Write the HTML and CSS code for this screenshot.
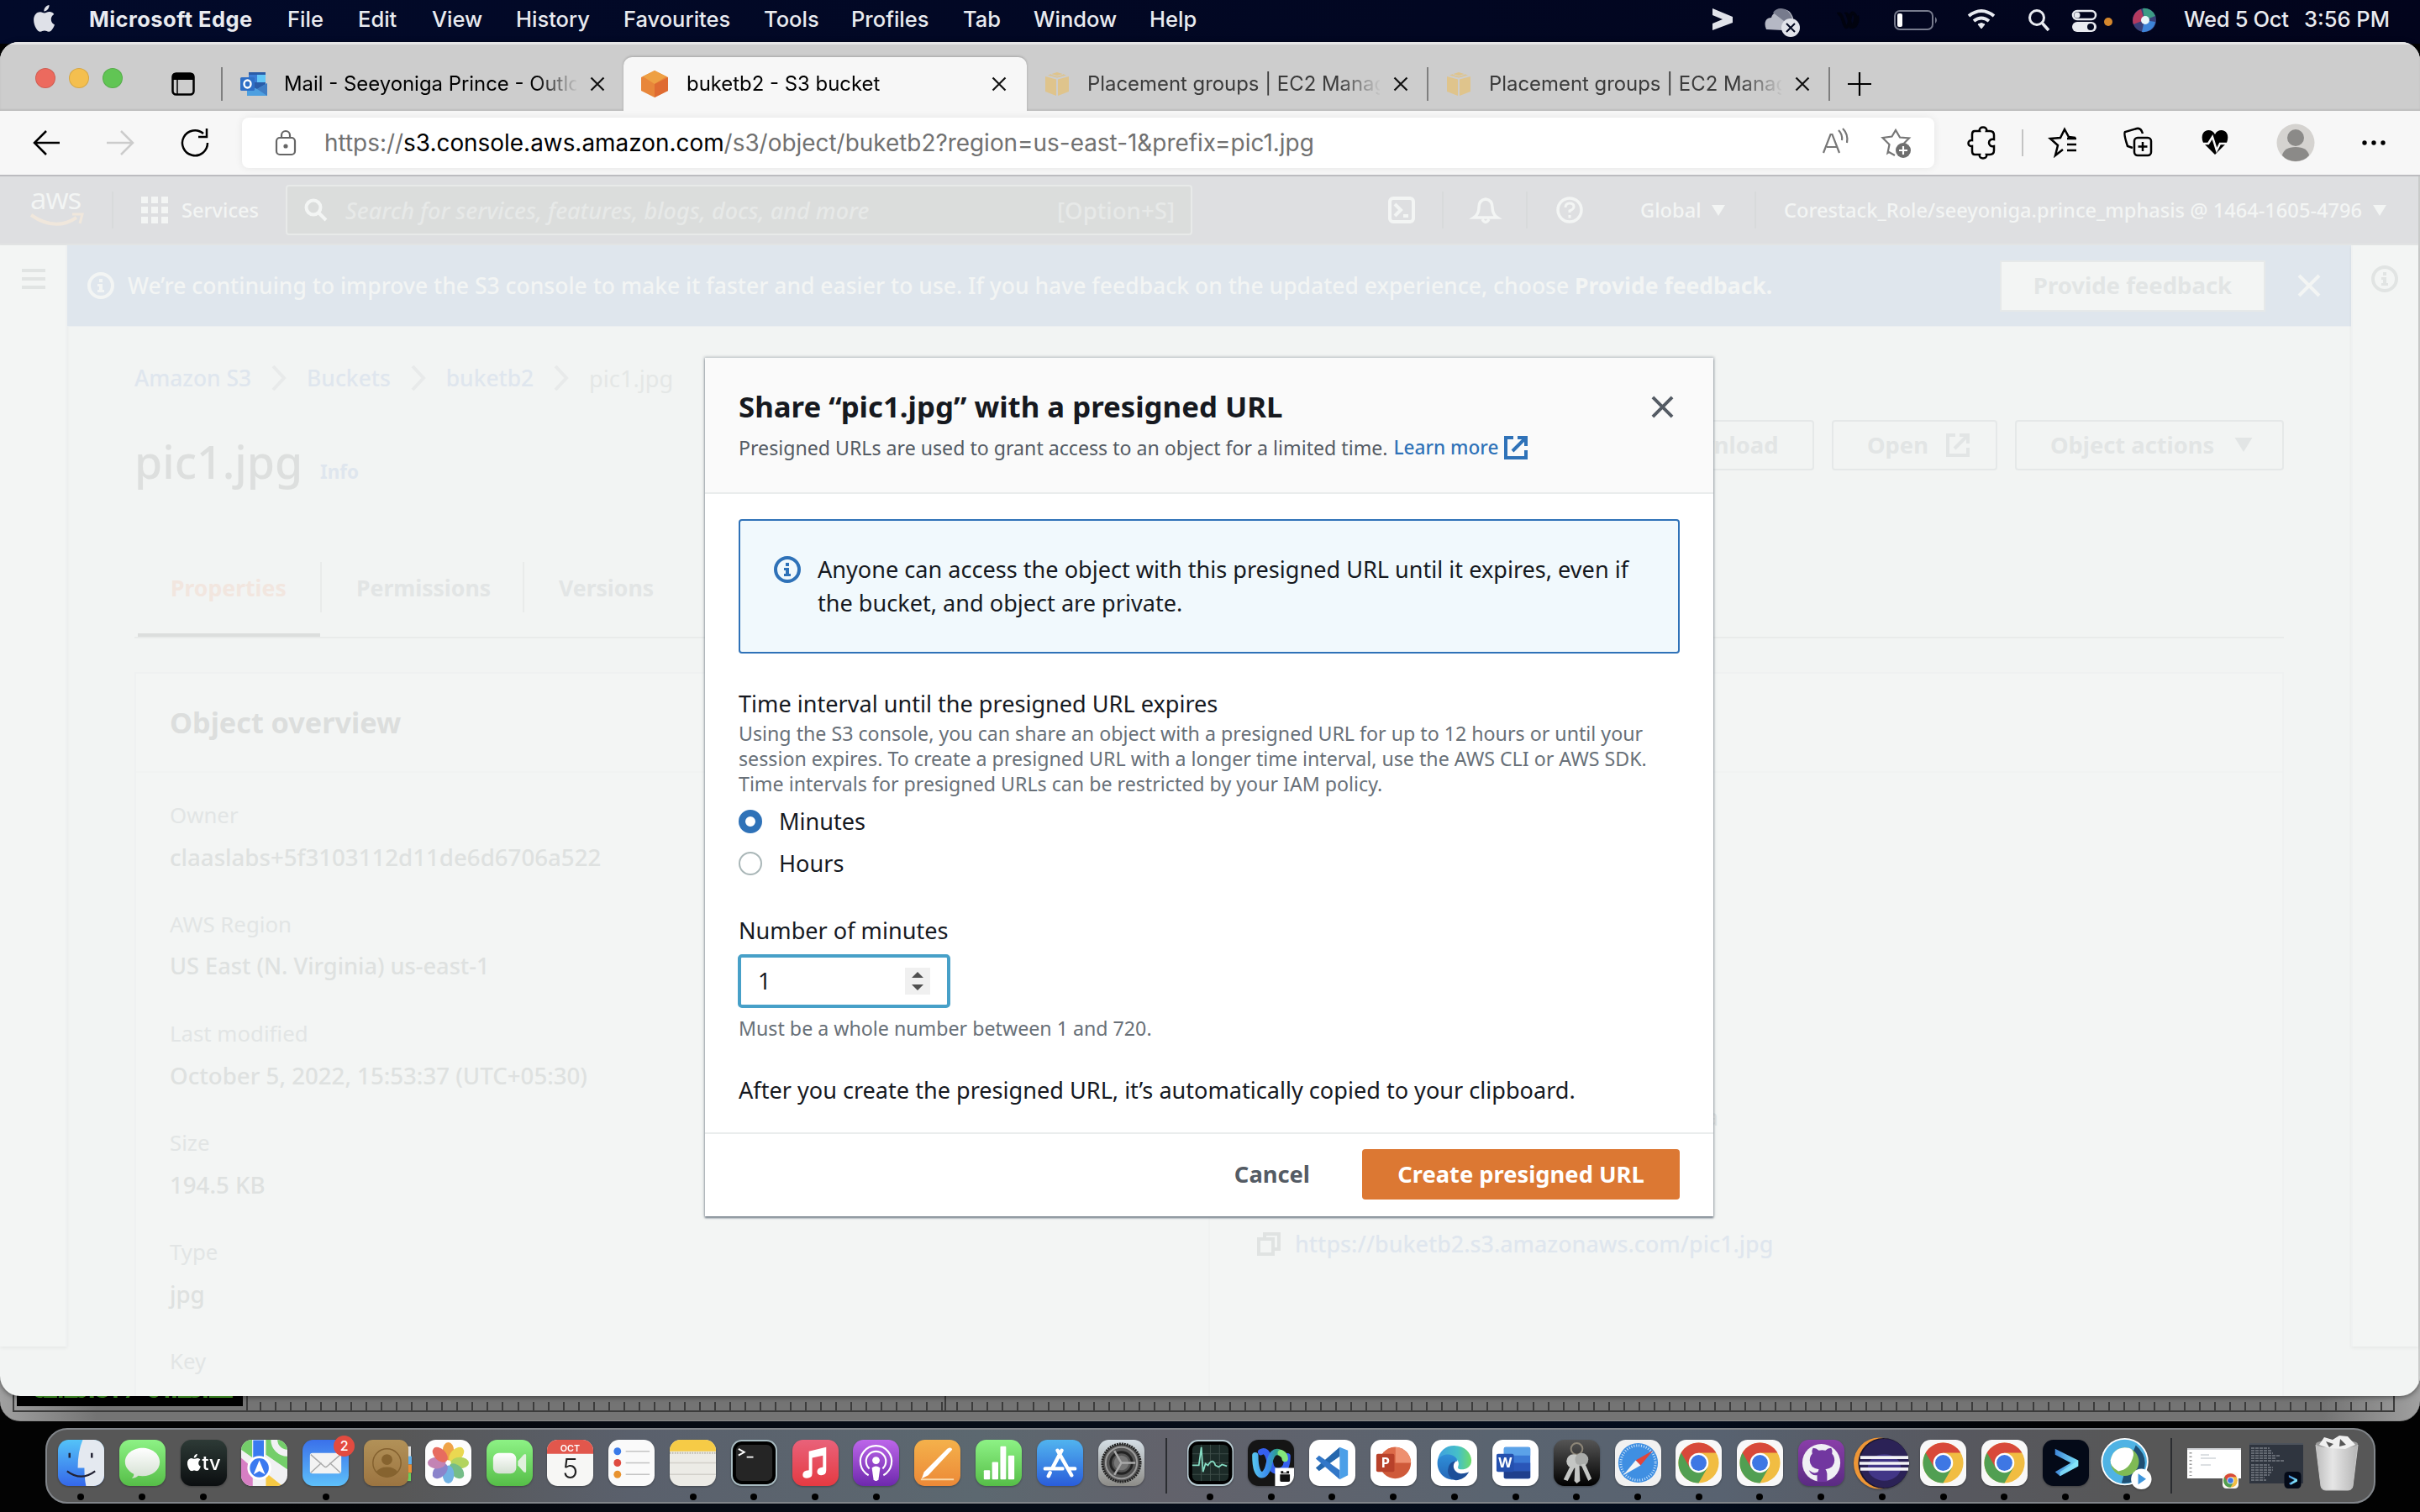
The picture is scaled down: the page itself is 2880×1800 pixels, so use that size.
FILE: index.html
```html
<!DOCTYPE html>
<html lang="en">
<head>
<meta charset="utf-8">
<title>buketb2 - S3 bucket</title>
<link rel="stylesheet" href="styles.css">
</head>
<body>
<svg class="defs" width="0" height="0" aria-hidden="true">
  <defs>
    <linearGradient id="gBlue" x1="0" y1="0" x2="0" y2="1"><stop offset="0" stop-color="#54c3f8"/><stop offset="1" stop-color="#3568ea"/></linearGradient>
    <linearGradient id="gGreen" x1="0" y1="0" x2="0" y2="1"><stop offset="0" stop-color="#8df285"/><stop offset="1" stop-color="#56be48"/></linearGradient>
    <linearGradient id="gMail" x1="0" y1="0" x2="0" y2="1"><stop offset="0" stop-color="#3a70ea"/><stop offset="1" stop-color="#5ec0fa"/></linearGradient>
    <linearGradient id="gTv" x1="0" y1="0" x2="0" y2="1"><stop offset="0" stop-color="#2d3a36"/><stop offset="1" stop-color="#0b0e10"/></linearGradient>
    <linearGradient id="gSilver" x1="0" y1="0" x2="0" y2="1"><stop offset="0" stop-color="#fff"/><stop offset="1" stop-color="#d4e0d2"/></linearGradient>
    <linearGradient id="gBrown" x1="0" y1="0" x2="0" y2="1"><stop offset="0" stop-color="#b29158"/><stop offset="1" stop-color="#9c7541"/></linearGradient>
    <linearGradient id="gMusic" x1="0" y1="0" x2="0" y2="1"><stop offset="0" stop-color="#e9627a"/><stop offset="1" stop-color="#e53a42"/></linearGradient>
    <linearGradient id="gPod" x1="0" y1="0" x2="0" y2="1"><stop offset="0" stop-color="#bd66ea"/><stop offset="1" stop-color="#6e29ad"/></linearGradient>
    <linearGradient id="gPages" x1="0" y1="0" x2="0" y2="1"><stop offset="0" stop-color="#f4b14b"/><stop offset="1" stop-color="#ec8937"/></linearGradient>
    <linearGradient id="gStore" x1="0" y1="0" x2="0" y2="1"><stop offset="0" stop-color="#51b4ef"/><stop offset="1" stop-color="#2a5dda"/></linearGradient>
    <linearGradient id="gPref" x1="0" y1="0" x2="0" y2="1"><stop offset="0" stop-color="#d5dfe6"/><stop offset="1" stop-color="#8d8c88"/></linearGradient>
    <linearGradient id="gKey" x1="0" y1="0" x2="0" y2="1"><stop offset="0" stop-color="#555"/><stop offset="1" stop-color="#000"/></linearGradient>
    <linearGradient id="gGit" x1="0" y1="0" x2="0" y2="1"><stop offset="0" stop-color="#8a3ea9"/><stop offset="1" stop-color="#5a2b82"/></linearGradient>
    <linearGradient id="gEdge" x1="0" y1="0" x2="1" y2="0"><stop offset="0" stop-color="#3f9fe0"/><stop offset=".6" stop-color="#45c0c8"/><stop offset="1" stop-color="#6fdc6a"/></linearGradient>
    <linearGradient id="gEdge2" x1="0" y1="0" x2="0" y2="1"><stop offset="0" stop-color="#2f8fd8"/><stop offset="1" stop-color="#2467b8"/></linearGradient>
    <linearGradient id="gShell" x1="0" y1="0" x2="1" y2="0"><stop offset="0" stop-color="#3f86d8"/><stop offset="1" stop-color="#7be3f8"/></linearGradient>
    <linearGradient id="gWx" gradientUnits="userSpaceOnUse" x1="6" y1="0" x2="50" y2="0"><stop offset="0" stop-color="#57c6ee"/><stop offset=".4" stop-color="#3a8cf0"/><stop offset=".65" stop-color="#2fa08e"/><stop offset="1" stop-color="#7fe07a"/></linearGradient>
    <linearGradient id="gCan" x1="0" y1="0" x2="1" y2="0"><stop offset="0" stop-color="#bdbdbd"/><stop offset=".4" stop-color="#e6e6e6"/><stop offset="1" stop-color="#b4b4b4"/></linearGradient>
    <symbol id="chrome" viewBox="0 0 56 56">
      <rect width="56" height="56" rx="13" fill="#f8f8f8"/>
      <circle cx="28" cy="28" r="24.500" fill="#f1bd42"/>
      <path d="M28 28 6.800 15.750A24.500 24.500 0 0 0 28 52.500L38.600 34Z" fill="#519f52"/>
      <path d="M6.800 15.750 17.500 34.100 28 15.750H49.200A24.500 24.500 0 0 0 6.800 15.750Z" fill="#d8493a"/>
      <circle cx="28" cy="28" r="12" fill="#fff"/><circle cx="28" cy="28" r="9.600" fill="#3e77e4"/>
    </symbol>
    <symbol id="shell" viewBox="0 0 56 56">
      <rect width="56" height="56" rx="13" fill="#040a18"/>
      <path d="M15 11 43 25v7L21 44l-6-5 19-11L15 18Z" fill="url(#gShell)"/>
      <path d="M43 25v7L21 44v-5Z" fill="#8beafc" opacity=".7"/>
    </symbol>
    <symbol id="info" viewBox="0 0 32 32"><circle cx="16" cy="16" r="14" fill="none" stroke="currentColor" stroke-width="4"/><path d="M14 8h4v4h-4zM12 14h6v7h2v3h-8v-3h2v-4h-2z" fill="currentColor"/></symbol>
    <symbol id="ext" viewBox="0 0 28 28"><path d="M11 2H2v24h24V17M16 2h10v10M26 2 10 18" fill="none" stroke="currentColor" stroke-width="4"/></symbol>
    <symbol id="cross" viewBox="0 0 28 28"><path d="M2 2 26 26M26 2 2 26" fill="none" stroke="currentColor" stroke-width="4"/></symbol>
    <symbol id="tabx" viewBox="0 0 18 18"><path d="M1.500 1.500l15 15M16.500 1.500l-15 15" fill="none" stroke="currentColor" stroke-width="2.200"/></symbol>
    <symbol id="chev" viewBox="0 0 18 30"><path d="M2 1 15 15 2 29" fill="none" stroke="currentColor" stroke-width="4"/></symbol>
    <symbol id="caret" viewBox="0 0 16 13"><path d="M0 0h16L8 13z" fill="currentColor"/></symbol>
    <symbol id="apple" viewBox="0 0 26 32"><path d="M18.500 0c.3 2-.6 3.900-1.800 5.300-1.200 1.400-2.800 2.200-4.300 2.100-.3-1.900.6-3.800 1.700-5C15.300 1.100 17 .2 18.500 0ZM24.300 10.900c-.2.100-3.500 2-3.500 6.100 0 4.700 4.100 6.300 4.200 6.400-.1.100-.7 2.300-2.200 4.500-1.300 1.900-2.700 3.900-4.800 3.900-2.100 0-2.700-1.200-5-1.200-2.400 0-3.200 1.200-5.100 1.200-2 0-3.400-1.900-4.800-3.900C1.400 25.400.1 21.400.1 17.700.1 11.500 4 8.200 7.900 8.200c2.100 0 3.800 1.300 5.100 1.300 1.300 0 3.200-1.400 5.600-1.400.9 0 4 .1 5.700 2.800Z" fill="currentColor"/></symbol>
    <symbol id="cube" viewBox="0 0 30 28"><path d="M15 0 26 3.500 15 6.500 4 3.500ZM1 5l13 3.500v19.500L1 23ZM29 5 16 8.500v19.500l13-5Z" fill="#dfc48c"/><path d="M8 2.500l7 2 7-2" fill="none" stroke="#cdcdcd"/></symbol>
  </defs>
</svg>

<header class="menubar">
  <svg class="apple" viewBox="0 0 26 32"><use href="#apple"/></svg>
  <nav class="menus"><b>Microsoft Edge</b><span>File</span><span>Edit</span><span>View</span><span>History</span><span>Favourites</span><span>Tools</span><span>Profiles</span><span>Tab</span><span>Window</span><span>Help</span></nav>
  <svg class="status" viewBox="0 0 560 50">
    <g fill="#e1e3ea">
      <path d="M8 10 32 20v7L8 36v-8l12-5-12-5Z"/>
      <path d="M72 35c-4-10 1-14 6-14 2-8 18-15 24-4 4 6 2 10-2 11l-9 8Z" fill="#b5b8c4"/><path d="M80 15c6-9 20-6 23 8l-10 2Z" fill="#777b8d"/>
      <circle cx="101" cy="33" r="11"/><path d="M96 28l10 10M106 28 96 38" stroke="#020820" stroke-width="2"/>
    </g>
    <path d="M157 17c6-4 7 17 11 15s3-20 8-16 1 16-5 16M166 17c4-4 5 15 9 15s7-8 5-13" fill="none" stroke="#01030f" stroke-width="4"/>
    <rect x="225" y="13" width="45" height="22" rx="6" fill="none" stroke="#777b8d" stroke-width="2"/><rect x="228" y="16" width="6" height="16" rx="2" fill="#fff"/><path d="M273 20q4 4 0 8Z" fill="#777b8d"/>
    <g fill="none" stroke="#e8eaf0" stroke-width="4"><path d="M313 19q15-12 30 0M319 25q9-7 18 0"/><path d="M324 29q4-3 8 0l-4 5Z" fill="#e8eaf0" stroke-width="1"/><circle cx="394" cy="21" r="8.500" stroke-width="3"/><path d="M400 27l8 9" stroke-width="3.500"/></g>
    <rect x="437" y="13" width="27" height="10" rx="5" fill="none" stroke="#e8eaf0" stroke-width="2.500"/><circle cx="442" cy="18" r="3.500" fill="#e8eaf0"/>
    <rect x="436" y="26" width="29" height="12" rx="6" fill="#e8eaf0"/><circle cx="458" cy="32" r="4" fill="#020820"/>
    <circle cx="479" cy="26" r="5" fill="#d4872d"/>
    <circle cx="522" cy="24" r="14" fill="#39417a"/><path d="M522 24 509 29a14 14 0 0 1 9-18Z" fill="#b43a5f"/><path d="M522 24 520 10a14 14 0 0 1 15 9Z" fill="#3d9b85"/><path d="M522 24l13 2a14 14 0 0 1-16 12Z" fill="#3d84d8"/><circle cx="523" cy="24" r="5" fill="#e8f6fa"/>
  </svg>
  <span class="date">Wed 5 Oct</span><span class="time">3:56 PM</span>
</header>

<section class="backwin">
  <div class="timecode"><span>02:20:34 / 04:25:22</span></div>
  <div class="ruler"><i class="mid"></i></div>
</section>

<main class="window">
  <div class="tabs">
    <div class="lights"><i class="r"></i><i class="y"></i><i class="g"></i></div>
    <svg class="spaces" viewBox="0 0 28 28"><rect x="1.500" y="1.500" width="25" height="25" rx="4" fill="none" stroke="#000" stroke-width="2.500"/><path d="M1 8V5a4 4 0 0 1 4-4h18a4 4 0 0 1 4 4v4H1Z"/><path d="M7 8v19" stroke="#000" stroke-width="1.500"/></svg>
    <i class="bar"></i>
    <div class="tab t1">
      <svg class="fav" viewBox="0 0 32 28"><path d="M10 0h20v28H10z" fill="#2a5ca8"/><path d="M10 3h10v9H10z" fill="#3a7bd5"/><path d="M20 3h10v9H20z" fill="#62c6f7"/><path d="M8 14l12 6 12-7v15H8z" fill="#4d9fe0"/><path d="M20 20l12 8V13z" fill="#3f7dc4"/><rect y="6" width="17" height="16" rx="1.500" fill="#2f6fc6"/><ellipse cx="8.500" cy="14" rx="4" ry="4.500" fill="none" stroke="#fff" stroke-width="2.400"/></svg>
      <span class="name">Mail - Seeyoniga Prince - Outlook</span><svg class="x"><use href="#tabx"/></svg>
    </div>
    <div class="tab active">
      <svg class="fav" viewBox="0 0 32 32"><path d="M16 0 32 8v16l-16 8L0 24V8Z" fill="#e8863a"/><path d="M16 0 30 7 16 16 2 7Z" fill="#eea043"/><path d="M16 16 32 8v16l-16 8Z" fill="#df6b32"/></svg>
      <span class="name">buketb2 - S3 bucket</span><svg class="x"><use href="#tabx"/></svg>
    </div>
    <div class="tab dim"><svg class="fav c"><use href="#cube"/></svg><span class="name">Placement groups | EC2 Management</span><svg class="x"><use href="#tabx"/></svg></div>
    <i class="bar"></i>
    <div class="tab dim"><svg class="fav c"><use href="#cube"/></svg><span class="name">Placement groups | EC2 Management</span><svg class="x"><use href="#tabx"/></svg></div>
    <i class="bar"></i>
    <svg class="plus" viewBox="0 0 28 28"><path d="M14 0v28M0 14h28" stroke="#000" stroke-width="2.200"/></svg>
  </div>

  <div class="toolbar">
    <svg class="navi" viewBox="0 0 220 40" fill="none" stroke="#000" stroke-width="2.500"><path d="M32 20H2M16 6 2 20l14 14"/><path d="M88 20h31M105 6l14 14-14 14" stroke="#ccc"/><path d="M208 20a15 15 0 1 1-5-11M207 3v10h-10"/></svg>
    <div class="address">
      <svg class="lock" viewBox="0 0 26 32" fill="none" stroke="#666" stroke-width="2.200"><rect x="2" y="10" width="22" height="20" rx="4"/><path d="M8 10V7a5 5 0 0 1 10 0v3"/><circle cx="13" cy="20" r="1.500" fill="#555"/></svg>
      <span class="url">https://<em>s3.console.aws.amazon.com</em>/s3/object/buketb2?region=us-east-1&amp;prefix=pic1.jpg</span>
      <svg class="urlicons" viewBox="0 0 108 36" fill="none" stroke="#777" stroke-width="2.200"><path d="M1 30 9.500 8h2L20 30M5 23h12M19 3q5 5 4 12M24 1q7 7 5 17"/><path d="M86 33l-7 -4-1.500 1 2-10-8-8 11-1.500L87 3l5 8.500 11 1-6 6"/><circle cx="96" cy="27" r="9" fill="#6e6e6e" stroke="none"/><path d="M96 22v10M91 27h10" stroke="#fff"/></svg>
    </div>
    <svg class="tools" viewBox="0 0 540 60" fill="none" stroke="#000" stroke-width="2.500">
      <path d="M18 19h6c-2-6 10-6 8 0h4q5 0 5 5v5c-8-2-8 10 0 8v5q0 5-5 5h-4c2 6-10 6-8 0h-6q-3 0-3-4v-6c-6 1-6-8 0-7v-7q0-4 3-4Z" transform="translate(0 -3)"/>
      <path d="M75 14v32" stroke="#c4c4c4" stroke-width="2"/>
      <path d="M123 38l-9 7 3-12-9-8 12-1 5-10 5 9 8 1M128 25h11M128 32h11M128 39h11"/>
      <path d="M206 36l-6-2q-5-15-3-17l14-4q5-1 7 6"/><rect x="208" y="24" width="20" height="21" rx="4"/><path d="M218 29v11M212.500 34.500h11"/>
      <path d="M304 44 290 30c-6-16 10-19 14-10 4-9 20-6 14 10Z" fill="#000" stroke="none"/><path d="M287 31h9l5-8 5 16 4-8h11" stroke="#f7f7f7"/>
      <circle cx="400" cy="30" r="22.500" fill="#d5d3d0" stroke="none"/><circle cx="400" cy="24" r="10" fill="#8b8a88" stroke="none"/><path d="M384 45q2-10 16-10t16 10q-6 7-16 7t-16-7Z" fill="#8b8a88" stroke="none"/>
      <g fill="#000" stroke="none"><circle cx="482" cy="30" r="2.700"/><circle cx="493" cy="30" r="2.700"/><circle cx="504" cy="30" r="2.700"/></g>
    </svg>
  </div>

  <div class="page">
    <div class="awsnav">
      <div class="logo"><span>aws</span><svg viewBox="0 0 64 16"><path d="M1 2q29 20 54 3" fill="none" stroke="#f0e7dc" stroke-width="4"/><path d="M50 1h12l-3 11" fill="none" stroke="#f0e7dc" stroke-width="3"/></svg></div>
      <i class="vr"></i>
      <svg class="apps" viewBox="0 0 32 32" fill="#f3f5f4"><path d="M0 0h8v8H0zM12 0h8v8h-8zM24 0h8v8h-8zM0 12h8v8H0zM12 12h8v8h-8zM24 12h8v8h-8zM0 24h8v8H0zM12 24h8v8h-8zM24 24h8v8h-8z"/></svg>
      <span class="services">Services</span>
      <div class="search"><svg viewBox="0 0 28 28" fill="none" stroke="#f3f5f4" stroke-width="4"><circle cx="11" cy="11" r="8.500"/><path d="M17 17l9 9"/></svg><span class="ph">Search for services, features, blogs, docs, and more</span><span class="key">[Option+S]</span></div>
      <svg class="navicons" viewBox="0 0 280 60" fill="none" stroke="#f3f5f4" stroke-width="4"><rect x="14" y="16" width="28" height="28" rx="4"/><path d="M20 23l7 7-7 7M30 37h6" /><path d="M114 39q6-4 6-12 0-9 8-10 8 1 8 10 0 8 6 12ZM124 41q4 7 8 0" stroke-width="3.500"/><circle cx="228" cy="30" r="14" stroke-width="3.500"/><path d="M223 27q0-5 5-5t5 4q0 3-5 5v2M228 36v3.500" stroke-width="3"/><path d="M77 8v44M177 8v44" stroke="#d8dadb" stroke-width="2"/></svg>
      <span class="global">Global</span><svg class="crt"><use href="#caret"/></svg><i class="vr2"></i>
      <span class="role">Corestack_Role/seeyoniga.prince_mphasis @ 1464-1605-4796</span><svg class="crt"><use href="#caret"/></svg>
    </div>
    <div class="body">
      <aside class="side"><svg viewBox="0 0 28 24" fill="#e1e4e3"><path d="M0 0h28v4H0zM0 10h28v4H0zM0 20h28v4H0z"/></svg></aside>
      <div class="content">
        <div class="flash"><svg class="i"><use href="#info"/></svg><span class="msg">We’re continuing to improve the S3 console to make it faster and easier to use. If you have feedback on the updated experience, choose <b>Provide feedback.</b></span><span class="fb">Provide feedback</span><svg class="x"><use href="#cross"/></svg></div>
        <div class="inner">
          <div class="crumbs"><span>Amazon S3</span><svg><use href="#chev"/></svg><span>Buckets</span><svg><use href="#chev"/></svg><span>buketb2</span><svg><use href="#chev"/></svg><span class="cur">pic1.jpg</span></div>
          <div class="head"><h1>pic1.jpg</h1><span class="inf">Info</span><div class="btns"><span class="btn b1">Download</span><span class="btn b2">Open<svg class="e"><use href="#ext"/></svg></span><span class="btn b3">Object actions<svg class="c"><use href="#caret"/></svg></span></div></div>
          <div class="ptabs"><span class="on">Properties</span><i></i><span class="perm">Permissions</span><i></i><span>Versions</span></div>
          <div class="card">
            <h2>Object overview</h2>
            <div class="cols">
              <dl><dt>Owner</dt><dd class="ow">claaslabs+5f3103112d11de6d6706a522</dd><dt>AWS Region</dt><dd class="reg">US East (N. Virginia) us-east-1</dd><dt>Last modified</dt><dd>October 5, 2022, 15:53:37 (UTC+05:30)</dd><dt>Size</dt><dd>194.5 KB</dd><dt>Type</dt><dd>jpg</dd><dt>Key</dt></dl>
              <div class="right"><span class="etag">a</span><div class="link"><svg viewBox="0 0 28 28" fill="none" stroke="#e0e3e2" stroke-width="4"><path d="M9 8V2h17v18h-5M2 8h17v18H2Z"/></svg><span>https://buketb2.s3.amazonaws.com/pic1.jpg</span></div></div>
            </div>
          </div>
        </div>
      </div>
      <aside class="side rt"><svg><use href="#info"/></svg></aside>
    </div>
  </div>

  <section class="modal">
    <header><div><h3>Share “pic1.jpg” with a presigned URL</h3><p>Presigned URLs are used to grant access to an object for a limited time. <a>Learn more</a><svg><use href="#ext"/></svg></p></div><svg class="x"><use href="#cross"/></svg></header>
    <div class="mbody">
      <div class="alert"><svg><use href="#info"/></svg><p>Anyone can access the object with this presigned URL until it expires, even if<br>the bucket, and object are private.</p></div>
      <div class="label">Time interval until the presigned URL expires</div>
      <p class="hint">Using the S3 console, you can share an object with a presigned URL for up to 12 hours or until your<br>session expires. To create a presigned URL with a longer time interval, use the AWS CLI or AWS SDK.<br>Time intervals for presigned URLs can be restricted by your IAM policy.</p>
      <div class="radio on"><i></i>Minutes</div>
      <div class="radio"><i></i>Hours</div>
      <div class="label">Number of minutes</div>
      <div class="field"><span>1</span><svg viewBox="0 0 30 32"><rect width="30" height="32" fill="#f0f0f0"/><path d="M8 12 15 5l7 7ZM8 20l7 7 7-7Z" fill="#505050"/></svg></div>
      <p class="hint h2">Must be a whole number between 1 and 720.</p>
      <p class="after">After you create the presigned URL, it’s automatically copied to your clipboard.</p>
    </div>
    <footer><span class="cancel">Cancel</span><span class="create">Create presigned URL</span></footer>
  </section>
</main>

<section class="dock">
  <div class="group">
    <div class="app run"><svg viewBox="0 0 56 56"><rect width="56" height="56" rx="13" fill="url(#gBlue)"/><path d="M30 0h13a13 13 0 0 1 13 13v30a13 13 0 0 1-13 13H34q-2-9-2-22h-8Q24 14 30 0Z" fill="#e4e9f0"/><path d="M14 16v6M41 16v6" stroke="#223" stroke-width="2.500"/><path d="M11 38q17 13 34 0" fill="none" stroke="#223" stroke-width="2.200"/></svg></div>
    <div class="app run"><svg viewBox="0 0 56 56"><rect width="56" height="56" rx="13" fill="url(#gGreen)"/><path d="M28 10c11 0 21 7 21 17s-9 17-21 17q-3 0-5-.5-3 3-8 3 3-2 2.500-5C11 38 7 33 7 27c0-10 10-17 21-17Z" fill="url(#gSilver)"/></svg></div>
    <div class="app run"><svg viewBox="0 0 56 56"><rect width="56" height="56" rx="13" fill="url(#gTv)"/><svg x="8" y="17" width="17" height="21" viewBox="0 0 26 32" color="#fff"><use href="#apple"/></svg><text x="26" y="37" class="tvt">tv</text></svg></div>
    <div class="app"><svg viewBox="0 0 56 56"><clipPath id="mp"><rect width="56" height="56" rx="13"/></clipPath><g clip-path="url(#mp)"><path d="M0 0h56v56H0z" fill="#f1f1f3"/><path d="M0 0h14v22L0 12zM30 0h26v36L30 18z" fill="#74ce6a"/><path d="M0 22l14 12v22H0z" fill="#d77fc4"/><path d="M30 40l20 16H30z" fill="#f6c944"/><circle cx="56" cy="0" r="16" fill="none" stroke="#f1f1f3" stroke-width="8"/><path d="M14 0h14v28H14z" fill="#397bf0" stroke="#fff"/></g><circle cx="22" cy="34" r="13" fill="#3b7af0" stroke="#fff" stroke-width="3"/><path d="M22 25l7 17-7-4-7 4Z" fill="#fff"/></svg></div>
    <div class="app run"><svg viewBox="0 0 56 56"><rect width="56" height="56" rx="13" fill="url(#gMail)"/><rect x="9" y="16" width="38" height="25" rx="3" fill="#f3f3f3"/><path d="M10 18l16 14q2 2 4 0l16-14M10 40l13-12M46 40 33 28" fill="none" stroke="#aaa" stroke-width="1.500"/></svg><span class="badge">2</span></div>
    <div class="app"><svg viewBox="0 0 56 56"><path d="M50 8h7v14h-7z" fill="#ddd"/><path d="M50 20h8v10h-8z" fill="#5fb0ee"/><path d="M50 30h8v10h-8z" fill="#ee8f35"/><path d="M50 40h7v10h-7z" fill="#6bcf5a"/><rect width="54" height="56" rx="11" fill="url(#gBrown)"/><g fill="none" stroke="#84612f" stroke-width="1.500"><circle cx="28" cy="28" r="17"/></g><circle cx="28" cy="24" r="6.500" fill="#86632f"/><path d="M15 39q4-6 13-6t13 6q-5 6-13 6t-13-6Z" fill="#86632f"/></svg></div>
    <div class="app"><svg viewBox="0 0 56 56"><rect width="56" height="56" rx="13" fill="#fdfdfd"/><g opacity=".9"><ellipse cx="28" cy="14" rx="7" ry="11" fill="#ee9a35"/><ellipse cx="28" cy="14" rx="7" ry="11" fill="#e8d53f" transform="rotate(45 28 28)"/><ellipse cx="28" cy="14" rx="7" ry="11" fill="#acd04f" transform="rotate(90 28 28)"/><ellipse cx="28" cy="14" rx="7" ry="11" fill="#67b77c" transform="rotate(135 28 28)"/><ellipse cx="28" cy="14" rx="7" ry="11" fill="#62a9e0" transform="rotate(180 28 28)"/><ellipse cx="28" cy="14" rx="7" ry="11" fill="#7f78c6" transform="rotate(225 28 28)"/><ellipse cx="28" cy="14" rx="7" ry="11" fill="#bd76ad" transform="rotate(270 28 28)"/><ellipse cx="28" cy="14" rx="7" ry="11" fill="#e55d4f" transform="rotate(315 28 28)"/></g></svg></div>
    <div class="app"><svg viewBox="0 0 56 56"><rect width="56" height="56" rx="13" fill="url(#gGreen)"/><rect x="8" y="16" width="28" height="25" rx="7" fill="url(#gSilver)"/><path d="M38 26l7-8q3-2 3 1v19q0 3-3 1l-7-8Z" fill="#dff0dc"/></svg></div>
    <div class="app"><svg viewBox="0 0 56 56"><rect width="56" height="56" rx="13" fill="#f7f7f5"/><path d="M0 17v-4A13 13 0 0 1 13 0h30a13 13 0 0 1 13 13v4Z" fill="#e2574c"/><text x="28" y="14" class="oct">OCT</text><text x="28" y="47" class="day">5</text></svg></div>
    <div class="app"><svg viewBox="0 0 56 56"><rect width="56" height="56" rx="13" fill="#fafafa"/><g fill="#3a7ae8"><circle cx="11" cy="14" r="4.500"/><circle cx="11" cy="28" r="4.500" fill="#df4b40"/><circle cx="11" cy="42" r="4.500" fill="#e8922f"/></g><path d="M21 14h29M21 28h29M21 42h29" stroke="#c4c4c4" stroke-width="1.500"/></svg></div>
    <div class="app run"><svg viewBox="0 0 56 56"><rect width="56" height="56" rx="13" fill="#ecebe6"/><path d="M0 14v-1A13 13 0 0 1 13 0h30a13 13 0 0 1 13 13v1Z" fill="#f6cb46"/><path d="M0 16h56" stroke="#b8b4a8" stroke-width="2" stroke-dasharray="1.500 1.500"/><path d="M0 28h56M0 42h56" stroke="#d2d0ca" stroke-width="1.500"/></svg></div>
    <div class="app run"><svg viewBox="0 0 56 56"><rect width="56" height="56" rx="13" fill="#a9bcc2"/><rect x="2" y="2" width="52" height="52" rx="11" fill="#000"/><rect x="6" y="6" width="44" height="44" rx="7" fill="#252525"/><path d="M9 11l7 4-7 4M19 21h8" fill="none" stroke="#fff" stroke-width="2"/></svg></div>
    <div class="app run"><svg viewBox="0 0 56 56"><rect width="56" height="56" rx="13" fill="url(#gMusic)"/><path d="M20 14l21-5v28q0 6-6 6-5 0-5-4.500t7-5.500V19l-13 3v19q0 5.500-6.500 5.500-5 0-5-4 0-5 7.500-5.500Z" fill="#fff"/></svg></div>
    <div class="app run"><svg viewBox="0 0 56 56"><rect width="56" height="56" rx="13" fill="url(#gPod)"/><g fill="none" stroke="#fff" stroke-width="2.200"><path d="M19 43a19 19 0 1 1 18 0M20 35a12 12 0 1 1 16 0"/></g><circle cx="28" cy="25" r="4.500" fill="#fff"/><path d="M23 34q5-4 10 0l-2 14q-3 4-6 0Z" fill="#fff"/></svg></div>
    <div class="app"><svg viewBox="0 0 56 56"><rect width="56" height="56" rx="13" fill="url(#gPages)"/><path d="M9 47l3-8L40 11q5-3 6 1L17 43Z" fill="#fff"/><path d="M8 48h40" stroke="#fbd9a8" stroke-width="2"/></svg></div>
    <div class="app"><svg viewBox="0 0 56 56"><rect width="56" height="56" rx="13" fill="url(#gGreen)"/><g fill="#fff"><rect x="10" y="37" width="7.500" height="11" rx="1"/><rect x="20" y="27" width="7.500" height="21" rx="1"/><rect x="30" y="8" width="7" height="40" rx="1"/><rect x="39.500" y="19" width="7.500" height="29" rx="1"/></g></svg></div>
    <div class="app"><svg viewBox="0 0 56 56"><rect width="56" height="56" rx="13" fill="url(#gStore)"/><g stroke="#fff" stroke-width="4.500" stroke-linecap="round"><path d="M30 13 19 34M16 40l-2 4M25 13l17 30M10 35h21M39 35h7"/></g></svg></div>
    <div class="app"><svg viewBox="0 0 56 56"><rect width="56" height="56" rx="13" fill="url(#gPref)"/><circle cx="28" cy="28" r="23" fill="#555" stroke="#222" stroke-width="3" stroke-dasharray="2 1"/><circle cx="28" cy="28" r="19" fill="none" stroke="#9b9b9b" stroke-width="2"/><circle cx="28" cy="28" r="13" fill="none" stroke="#222" stroke-width="3"/><circle cx="28" cy="28" r="9" fill="#777"/><path d="M28 28h17M28 28 19.500 13.300M28 28l-8.500 14.700" stroke="#aaa" stroke-width="2.500"/></svg></div>
  </div>
  <i class="sep"></i>
  <div class="group g2">
    <div class="app run"><svg viewBox="0 0 56 56"><rect width="56" height="56" rx="13" fill="#b9cdd4"/><rect x="1.500" y="2" width="53" height="52" rx="12" fill="#000"/><rect x="6" y="6" width="44" height="44" rx="6" fill="#1c2b28"/><path d="M6 17h44M6 28h44M6 42h44M17 6v44M28 6v44M39 6v44" stroke="#3c4b47"/><path d="M6 31h8l3-22 2 30 3-10 3 2q6-10 9 0l4 2 4-3 6 2" fill="none" stroke="#86dcc4" stroke-width="1.800"/></svg></div>
    <div class="app run"><svg viewBox="0 0 56 56"><rect width="56" height="56" rx="13" fill="#151515"/><g fill="none" stroke-width="7.500" stroke-linecap="round"><path d="M16 15C24 10 26 24 28 32S48 44 48 20" stroke="#3560ee"/><path d="M9 19C9 50 22 46 25 32S32 10 43 18" stroke="url(#gWx)"/><path d="M40 16q5 2 5 7" stroke="#83e67c"/></g><path d="M33 34h23v9a13 13 0 0 1-13 13H33Z" fill="#fff"/><path d="M39 42h12v7a2 2 0 0 1-2 2h-8a2 2 0 0 1-2-2ZM40 38h3v2h4v-2h3v3H40Z" fill="#111"/></svg></div>
    <div class="app run"><svg viewBox="0 0 56 56"><rect width="56" height="56" rx="13" fill="#fff"/><path d="M37 9 47 13v30l-10 5Z" fill="#4b9fe8"/><path d="M37 9 8 34l4 4 25-18Z" fill="#2467ae"/><path d="M37 48 8 23l4-4 25 18Z" fill="#3277c8"/></svg></div>
    <div class="app run"><svg viewBox="0 0 56 56"><rect width="56" height="56" rx="13" fill="#fff"/><circle cx="30" cy="28" r="19" fill="#cf5a3a"/><path d="M30 9a19 19 0 0 1 19 19H30Z" fill="#ee9070"/><path d="M30 9v19H11A19 19 0 0 1 30 9Z" fill="#dd6a48"/><rect x="7" y="17" width="22" height="22" rx="2" fill="#b8412a"/><text x="18" y="34" class="ms">P</text></svg></div>
    <div class="app run"><svg viewBox="0 0 56 56"><rect width="56" height="56" rx="13" fill="#fff"/><path d="M8 25C10 13 18 7 28 7c13 0 21 9 21 18 0 8-6 11-12 11-4 0-5-2-4-4 2-6-2-11-10-11-6 0-12 2-15 4Z" fill="url(#gEdge)"/><path d="M8 25c3-6 9-8 15-7 6 1 9 5 9 8-5 0-10 7-8 13 1 5 5 8 8 9-15 3-26-9-24-23Z" fill="url(#gEdge2)"/><path d="M30 26c-6 6-1 15 7 15 4 0 7-1 9-2-3 6-9 10-16 10-8-2-11-9-9-15 1-5 5-8 9-8Z" fill="#1d4f98"/></svg></div>
    <div class="app run"><svg viewBox="0 0 56 56"><rect width="56" height="56" rx="13" fill="#fff"/><rect x="14" y="9" width="32" height="38" rx="2" fill="#3a78d4"/><path d="M14 11q0-2 2-2h28q2 0 2 2v8H14z" fill="#5ba2e8"/><path d="M14 28h32v10H14z" fill="#2a56b8"/><path d="M14 38h32v7q0 2-2 2H16q-2 0-2-2z" fill="#1f3f8c"/><rect x="5" y="17" width="21" height="22" rx="2" fill="#2450ae"/><text x="15.500" y="34" class="ms">W</text></svg></div>
    <div class="app run"><svg viewBox="0 0 56 56"><rect width="56" height="56" rx="13" fill="url(#gKey)"/><circle cx="28" cy="11" r="7" fill="none" stroke="#8d8678" stroke-width="2"/><g fill="#c4c6c4"><circle cx="24" cy="26" r="8.500"/><circle cx="34" cy="24" r="8" fill="#a9aba9"/><path d="M20 32l5 2-8 16-5-2ZM26 30h5l1 20-4 3-3-3ZM33 30l5-1 8 18-4 3Z"/></g></svg></div>
    <div class="app run"><svg viewBox="0 0 56 56"><rect width="56" height="56" rx="13" fill="#f1f1f1"/><circle cx="28" cy="28" r="24" fill="#3f8fe2"/><circle cx="28" cy="28" r="21" fill="none" stroke="#cfe6fa" stroke-width="3" stroke-dasharray="1 2"/><path d="M46 13 25 25l6 6Z" fill="#e2443a"/><path d="M10 43 25 25l6 6Z" fill="#f4f4f4"/></svg></div>
    <div class="app run"><svg><use href="#chrome"/></svg></div>
    <div class="app run"><svg><use href="#chrome"/></svg></div>
    <div class="app run"><svg viewBox="0 0 56 56"><rect width="56" height="56" rx="13" fill="url(#gGit)"/><circle cx="28" cy="28" r="23" fill="#f0f0f4"/><path d="M23 51v-8q-7 1-10-6 6 5 11 2l1-3Q14 34 14 25q0-5 3-8-1-4 1-7 4 0 7 3 4-1 8 0 3-3 7-3 2 3 1 7 3 3 3 8 0 9-11 11 2 2 2 5v10Z" fill="#7237a0"/></svg></div>
    <div class="app run big"><svg viewBox="0 0 68 62"><circle cx="31" cy="31" r="31" fill="#ee9636"/><circle cx="36" cy="31" r="30.500" fill="#1a1630"/><circle cx="37" cy="31" r="29.500" fill="#2b2256"/><ellipse cx="37" cy="36" rx="20" ry="16" fill="#423687"/><path d="M8 24h58M7 31h60M8 38h58" stroke="#f2f2f6" stroke-width="3.600"/></svg></div>
    <div class="app run"><svg><use href="#chrome"/></svg></div>
    <div class="app run"><svg><use href="#chrome"/></svg></div>
    <div class="app run"><svg><use href="#shell"/></svg></div>
    <div class="app run big"><svg viewBox="0 0 66 66"><circle cx="31" cy="31" r="30" fill="#fff"/><circle cx="31" cy="31" r="28" fill="#4fb3e4"/><path d="M45 10q16 14 10 32-8 18-28 16L31 44Z" fill="#1f4f73"/><circle cx="31" cy="31" r="18" fill="#7fba55"/><path d="M31 13q12 0 11 10-4 18-19 20-11-6-10-14 3-15 18-16Z" fill="#fff"/><circle cx="52" cy="53" r="13" fill="#fff"/><path d="M48 46l10 7-10 7Z" fill="#3f96dc"/></svg></div>
  </div>
  <i class="sep s2"></i>
  <svg class="trail" viewBox="0 0 220 86">
    <rect x="8" y="22" width="64" height="36" fill="#fff"/><path d="M8 23h64" stroke="#cfd2d6" stroke-width="2"/><path d="M12 27v28" stroke="#999" stroke-width="3" stroke-dasharray="1.500 3"/><path d="M24 30h10M24 34h18M24 42h12" stroke="#b9c0c6"/><svg x="49" y="51" width="21" height="19"><use href="#chrome"/></svg>
    <rect x="82" y="16" width="64" height="48" fill="#2f353f"/><path d="M82 17h64" stroke="#4d535c" stroke-width="2"/><path d="M84 22h22M84 25h24M84 28h26M84 31h34M84 34h30M84 37h40M84 42h22M84 45h26M84 48h26M84 51h24M84 54h22M84 57h16M84 60h18" stroke="#9a9fa6" stroke-dasharray="4 1"/><svg x="123" y="50" width="21" height="20"><use href="#shell"/></svg>
    <path d="M161 18h50l-6 49q-1 5-6 5h-26q-5 0-6-5Z" fill="url(#gCan)" stroke="#c9c9c9"/><ellipse cx="186" cy="17" rx="25" ry="5" fill="#9b9b9b"/><path d="M165 18l6-9 10 3 8-5 10 1 9 10-12 5-20-1Z" fill="#f0f0f0"/><path d="M173 14l9 3-5 4ZM190 11l7 7-8 2ZM200 9l4 8" fill="#555"/>
  </svg>
</section>
</body>
</html>
```
FILE: styles.css
```css
* { box-sizing: border-box; }
body { margin: 0; width: 2880px; height: 1800px; overflow: hidden; position: relative; font-family: "Noto Sans", sans-serif; font-size: 26.800px;
  background: linear-gradient(90deg, #030303 0 8%, #060a12 25%, #060d18 45%, #030c1c 70%, #010203 85%, #020202); }
h1, h2, h3, p, dl, dd { margin: 0; }
svg { flex: none; display: block; overflow: visible; }
.defs { position: absolute; }
i { display: block; flex: none; }
span, b, h1 { white-space: nowrap; }

/* macOS menu bar */
.menubar { height: 52px; display: flex; align-items: flex-start; background: linear-gradient(90deg, #020a2a, #020722 60%, #02041c); color: #e9ebf0; font: 500 25.500px/46px Inter, sans-serif; }
.apple { width: 26px; height: 32px; margin: 6px 0 0 40px; color: #dfe1e8; }
.menus { display: grid; margin-left: 40px; grid-template-columns: 236px 84px 88px 100px 128px 167px 104px 133px 84px 138px 60px; }
.menus b { font-weight: 700; letter-spacing: .45px; }
.status { width: 560px; height: 50px; margin-left: 602px; }
.date { margin-left: 9px; width: 143px; letter-spacing: -.3px; }

/* window behind the browser */
.backwin { position: absolute; left: 0; top: 1600px; width: 2880px; height: 92px; border-radius: 0 0 24px 24px; background: linear-gradient(90deg, #a0a0a0, #747474 4%, #747474 96%, #a0a0a0); display: flex; align-items: flex-end; padding: 0 30px 10px 15px; border-bottom: 1px solid #8a8a8a; }
.timecode { height: 82px; width: 280px; flex: none; border: solid #3c3c3c; border-width: 0 2px 2px 2px; padding: 0 4px 5px 3px; display: flex; align-items: flex-end; }
.timecode span { flex: 1; height: 36px; background: #000; color: #4fae2e; font: bold 33px/36px "Liberation Mono", monospace; text-align: center; letter-spacing: -7.500px; }
.ruler { flex: 1; height: 82px; border: solid #3c3c3c; border-width: 0 2px 2px 0; padding: 70px 0 0 14px; background: repeating-linear-gradient(90deg, #3c3c3c 0 2px, transparent 2px 18.030px) 14px 70px / 2538px 10px no-repeat; }
.ruler .mid { width: 2px; height: 80px; margin: -70px 0 0 815px; background: #3c3c3c; }

/* browser window */
.window { position: absolute; left: 0; top: 50px; width: 2880px; height: 1612px; border-radius: 22px 22px 24px 24px; overflow: hidden; background: #f2f4f3; display: flex; flex-direction: column; box-shadow: 0 1px 6px rgba(0,0,0,.5); }
.tabs { flex: none; height: 82px; background: #cdcdcd; border-top: 3px solid #e6e6e6; display: flex; align-items: center; padding-top: 15px; font: 400 23.900px/36px Inter, sans-serif; box-shadow: inset 0 -2px 2px #bdbdbd; }
.lights { display: flex; gap: 16px; margin: -14px 0 0 42px; }
.lights i { width: 24px; height: 24px; border-radius: 50%; border: 1px solid rgba(0,0,0,.12); }
.r { background: #ec6a5e; } .y { background: #f4bf4f; } .g { background: #61c554; }
.spaces { width: 28px; height: 28px; margin-left: 58px; }
.tabs .bar { width: 2px; height: 40px; background: #7f7f7f; }
.spaces + .bar { margin-left: 31px; }
.tab { height: 64px; display: flex; align-items: center; flex: none; padding-left: 21px; color: #000; }
.tab .fav { width: 32px; height: 28px; margin-right: 20px; }
.tab .fav.c { width: 30px; margin-right: 21px; }
.tab .name { width: 348px; margin-right: 2px; overflow: hidden; mask-image: linear-gradient(90deg, #000 300px, transparent 350px); }
.tab .x { width: 18px; height: 18px; margin-left: 14px; color: #111; }
.t1 { width: 477px; }
.active { width: 480px; background: #f7f7f7; border-radius: 10px 10px 0 0; box-shadow: 0 -1px 3px rgba(0,0,0,.2); }
.active .fav { height: 32px; margin-right: 22px; }
.active .x { margin-left: 13px; }
.dim { color: #3b3b3b; width: 476px; }
.plus { width: 28px; height: 28px; margin-left: 21px; }
.toolbar { flex: none; height: 78px; background: #f7f7f7; border-bottom: 2px solid #bcbcc0; display: flex; align-items: center; }
.navi { width: 220px; height: 40px; margin-left: 39px; }
.address { width: 2014px; height: 60px; margin-left: 29px; background: #fff; border-radius: 8px; display: flex; align-items: center; box-shadow: 0 0 10px rgba(0,0,0,.08); }
.lock { width: 26px; height: 32px; margin-left: 39px; }
.url { margin-left: 33px; font: 400 27.920px/40px Inter, sans-serif; color: #717171; flex: 1; }
.url em { color: #000; font-style: normal; }
.urlicons { width: 108px; height: 36px; margin-right: 25px; }
.tools { width: 540px; height: 60px; margin-left: 30px; }

/* console navigation */
.page { flex: 1; min-height: 0; display: flex; flex-direction: column; border-right: 2px solid #c9cbca; }
.awsnav { flex: none; height: 82px; background: #dedfe1; display: flex; align-items: center; color: #f3f5f4; font-size: 23.650px; font-weight: 500; border-bottom: 2px solid #e2e4e4; }
.logo { width: 64px; margin-left: 36px; }
.logo span { display: block; font: 500 35px/32px "Open Sans", sans-serif; letter-spacing: -1px; margin-top: -10px; }
.logo svg { width: 64px; height: 16px; margin-top: 2px; }
.vr { width: 2px; height: 44px; background: #d8dadb; margin-left: 33px; }
.apps { width: 32px; height: 32px; margin-left: 33px; }
.services { margin-left: 16px; width: 124px; }
.search { width: 1079px; height: 60px; background: #dbdddc; border: 2px solid #e8eae9; border-radius: 4px; display: flex; align-items: center; font-size: 27px; padding: 0 19px 0 20px; color: #e7e9e8; }
.search svg { width: 28px; height: 28px; }
.ph { font-style: italic; margin-left: 21px; flex: 1; }
.key { font-size: 27.600px; }
.navicons { width: 280px; height: 60px; margin-left: 221px; }
.global { margin-left: 32px; width: 85px; }
.crt { width: 16px; height: 13px; }
.vr2 { width: 2px; height: 44px; background: #d8dadb; margin-left: 35px; }
.role { margin-left: 33px; width: 701px; }

/* console page */
.body { flex: 1; display: flex; min-height: 0; align-items: flex-start; }
.side { width: 80px; height: 1311px; background: #f3f5f4; border-right: 2px solid #eff1f1; box-shadow: 0 2px 4px rgba(0,0,0,.05); padding: 28px 0 0 26px; }
.side svg { width: 28px; height: 24px; }
.side.rt { padding: 24px 0 0 22px; border: 0; border-left: 2px solid #eff1f1; color: #e1e4e3; }
.side.rt svg { width: 32px; height: 32px; }
.content { width: 2718px; }
.flash { height: 97px; background: #dfe6ed; color: #f3f5f4; display: flex; align-items: center; padding-left: 24px; border-bottom: 1px solid #eaeef0; font-weight: 500; font-size: 26.500px; }
.flash .i { width: 32px; height: 32px; }
.msg { margin-left: 16px; width: 2228px; }
.fb { width: 316px; height: 61px; background: #f3f5f4; border: 2px solid #e6e9e9; text-align: center; line-height: 56px; font-weight: 700; font-size: 27.500px; color: #e2e5e5; }
.flash .x { width: 28px; height: 28px; margin-left: 38px; }
.inner { padding: 0 80px; }
.crumbs { display: flex; align-items: center; height: 40px; margin-top: 41px; color: #dfe6ee; font-weight: 500; font-size: 26.400px; gap: 24px; }
.crumbs svg { width: 18px; height: 30px; color: #e8eaea; }
.crumbs .cur { color: #e4e7e6; font-weight: 400; font-size: 27.200px; }
.head { display: flex; height: 100px; margin-top: 30px; }
h1 { font: 500 53.600px/99px "Noto Sans", sans-serif; color: #dddfde; width: 221px; }
.inf { font: 700 22.400px/40px "Noto Sans", sans-serif; color: #dfe6ee; margin-top: 42px; }
.btns { display: flex; gap: 21px; margin: 0 0 0 auto; }
.btn { height: 60px; border: 2px solid #e5e8e8; border-radius: 4px; display: flex; align-items: center; font-weight: 700; font-size: 27.300px; line-height: 36px; color: #e2e5e5; padding: 0 40px 1px; }
.b1 { width: 210px; padding: 0 40px 1px 29px; } .b2 { width: 197px; justify-content: space-between; padding-right: 31px; } .b3 { width: 320px; justify-content: space-between; padding-right: 35px; }
.btn .e { width: 28px; height: 28px; } .btn .c { width: 22px; height: 17px; }
.ptabs { display: flex; height: 120px; margin-top: 40px; border-bottom: 2px solid #e9ebea; font-weight: 700; color: #e2e5e5; line-height: 120px; padding-left: 4px; font-size: 26.600px; }
.ptabs span { padding: 0 41px; height: 118px; }
.ptabs .perm { width: 239px; }
.ptabs i { width: 2px; height: 60px; background: #e9ebea; margin-top: 29px; }
.ptabs .on { color: #f2e6df; border-bottom: 4px solid #dcdedd; width: 217px; padding-left: 39px; }
.card { margin-top: 40px; height: 900px; background: #f3f5f4; border: 2px solid #eff1f1; }
h2 { font: 700 34.200px/115px "Noto Sans", sans-serif; height: 118px; padding-left: 40px; color: #dcdedd; border-bottom: 2px solid #f1f3f2; }
.cols { display: flex; height: 780px; }
.cols dl { width: 1278px; padding: 29.500px 0 0 40px; line-height: 40px; border-right: 2px solid #f0f2f1; }
dt { color: #e2e5e5; height: 50px; font-size: 25.800px; }
dd { color: #dee1e0; height: 40px; margin-bottom: 40.200px; font-size: 27.650px; font-weight: 500; }
dd.reg { font-size: 27.200px; }
.right { padding: 390px 0 0 56px; line-height: 40px; color: #e2e5e5; }
.etag { display: block; padding-left: 534px; }
.link { display: flex; align-items: center; gap: 17px; margin-top: 111px; color: #dfe6ee; font-size: 26.850px; font-weight: 500; }
.link svg { width: 28px; height: 28px; }

/* dialog */
.modal { position: absolute; left: 839px; top: 376px; width: 1200px; height: 1022px; background: #fff; color: #16191f; font-size: 27.100px; box-shadow: 0 2px 2px #77818c, 0 0 3px 1px rgba(90,100,110,.4); }
.modal header { height: 162px; background: #fafafa; border-bottom: 2px solid #eaeded; display: flex; justify-content: space-between; padding: 38px 47px 0 40px; }
h3 { font: 700 34.780px/40px "Noto Sans", sans-serif; }
.modal header p { display: flex; gap: 7px; align-items: center; margin-top: 14px; font-size: 23.150px; line-height: 30px; color: #545b64; }
.modal a { color: #2f72b8; font-weight: 500; font-size: 22.600px; }
.modal header p svg { width: 28px; height: 28px; color: #2f72b8; }
.modal header .x { width: 27px; height: 27px; margin-top: 7px; color: #545b64; }
.mbody { padding: 30px 40px 0; line-height: 40px; height: 760px; }
.alert { height: 160px; border: 2px solid #2f72b8; border-radius: 4px; background: #f1f9fd; display: flex; padding: 38px 0 0 40px; gap: 20px; line-height: 39.600px; white-space: nowrap; }
.alert svg { width: 32px; height: 32px; color: #2f72b8; margin-top: 4px; }
.label { margin-top: 40px; }
.hint { font-size: 23.200px; line-height: 30px; color: #687078; white-space: nowrap; }
.radio { display: flex; align-items: center; gap: 20px; margin-top: 10px; }
.radio i { width: 28px; height: 28px; border-radius: 50%; border: 2px solid #aab7b8; }
.radio.on i { border: 8.500px solid #2f72b8; }
.field { width: 253px; height: 64px; margin: 8px 0 0 -1px; border: 4px solid #47a0c8; border-radius: 5px; display: flex; align-items: center; justify-content: space-between; padding: 0 20px; }
.field svg { width: 30px; height: 32px; }
.h2 { margin-top: 9px; }
.after { margin-top: 39px; white-space: nowrap; }
.modal footer { border-top: 2px solid #eaeded; height: 100px; padding: 18px 40px 0; display: flex; justify-content: flex-end; font-weight: 700; font-size: 27.300px; line-height: 59px; }
.cancel { color: #545b64; margin-right: 62px; }
.create { width: 378px; height: 60px; background: #dc7833; color: #fff; text-align: center; border-radius: 4px; }

/* dock */
.dock { position: absolute; left: 54px; top: 1700px; width: 2773px; height: 90px; border: 2px solid #82868b; border-radius: 26px; display: flex; background: linear-gradient(90deg, #575757 0 15%, #5a606c 25%, #5c6870 40%, #62626b 48%, #5a6470 62%, #586270 72%, #57585f 82%, #575757 90%); }
.group { display: flex; margin-left: 4px; }
.app { width: 72.820px; height: 86px; padding: 12px 0 0 8.900px; position: relative; }
.app > svg { width: 55px; height: 55px; filter: drop-shadow(0 1px 1px rgba(0,0,0,.3)); }
.g2 { margin-left: 15px; }
.g2 .app { width: 72.730px; }
.run::after { content: ""; position: absolute; left: 32.400px; bottom: 2px; width: 8px; height: 8px; border-radius: 50%; background: #000; }
.app.big { padding: 9px 0 0 2.500px; }
.app.big > svg { width: 67px; height: 62px; }
.badge { position: absolute; left: 46px; top: 7px; width: 25px; height: 25px; border-radius: 50%; background: #e34b40; color: #fff; font: 500 16px/25px Inter, sans-serif; text-align: center; }
.sep { width: 2px; height: 66px; margin: 10px 0 0 16px; background: #2b2d31; }
.s2 { margin-left: 16px; }
.trail { width: 220px; height: 86px; margin-left: 10px; }
.tvt { font: 500 24px Inter, sans-serif; fill: #fff; }
.oct { font: 600 11px Inter, sans-serif; fill: #fff; text-anchor: middle; }
.day { font: 300 33px Inter, sans-serif; fill: #222; text-anchor: middle; }
.ms { font: 700 17px "Open Sans", sans-serif; fill: #fff; text-anchor: middle; }
```
